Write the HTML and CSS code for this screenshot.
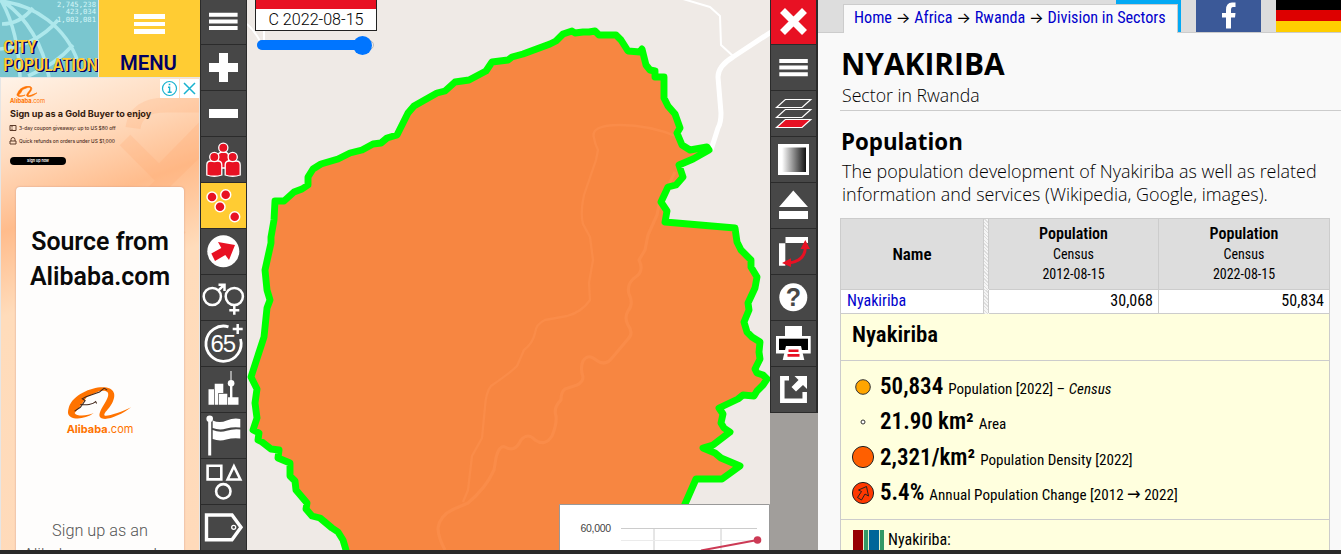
FILE: index.html
```html
<!DOCTYPE html>
<html lang="en">
<head>
<meta charset="utf-8">
<title>Nyakiriba (Sector, Rwanda)</title>
<link rel="stylesheet" href="styles.css">
</head>
<body>
<div class="app">
  <aside class="side">
    <div class="brand">
      <a class="logo">
        <svg class="globe" viewBox="0 0 98 77"><g fill="none" stroke="#aee8ec" stroke-width="3.600"><path d="M0 1C35 5 66 27 78 62M4 2C27 18 43 45 49 77M2 2C13 22 19 48 20 77M2 24Q20 24 33 8M0 49Q36 46 58 20M28 76Q55 65 73 45"/></g></svg>
        <span class="figures">2,745,238<br>423,034<br>1,003,081</span>
        <span class="wordmark"><span>CITY</span><span>POPULATION</span></span>
      </a>
      <a class="menu"><i></i><i></i><i></i><b>MENU</b></a>
    </div>
    <div class="ad">
      <svg class="ad-art" viewBox="0 0 198 160"><g fill="none" stroke="#ffa468" stroke-width="15" opacity=".2"><path d="M100 165L152 115 205 63M124 62L158 96 205 48M125 160L150 136 180 160M132 50Q135 27 165 27H200"/></g></svg>
      <div class="ad-badges">
        <svg viewBox="0 0 19 19"><circle cx="9.500" cy="9.500" r="7" fill="none" stroke="#18b2cf" stroke-width="1.200"/><path d="M8 8.200h1.600v5M7.700 13.300h4M8.700 5.500h1.600" fill="none" stroke="#18b2cf" stroke-width="1.400"/></svg>
        <svg viewBox="0 0 19 19"><path d="M4 4L15 15M15 4L4 15" stroke="#18b2cf" stroke-width="1.500"/></svg>
      </div>
      <svg class="ad-logo" viewBox="0 0 70 45"><path d="M6 21C10 9 26 1 39 1c12 0 14 7 8 16-4 6-8 10-8 13 0 4 20-4 28-8-9 8-22 14-30 12-10-4 7-17 9-24 2-6-3-7-9-5L21 11 15 22 8 29c2 4 14 3 21 0C20 34 10 35 5 32 1 29 3 26 6 21z" fill="#ff7300" stroke="#ff7300" stroke-width="2"/></svg>
      <div class="ad-name"><b>Alibaba</b>.com</div>
      <div class="ad-head">Sign up as a Gold Buyer to enjoy</div>
      <div class="ad-line"><svg viewBox="0 0 8 8"><path d="M1 1.500h6v5H1zM3 2v1.500M3 4.500V6" fill="none" stroke="#5c3a28"/></svg>3-day coupon giveaway: up to US $80 off</div>
      <div class="ad-line"><svg viewBox="0 0 8 8"><path d="M2 4V2.500a2 2 0 0 1 4 0V4M1 4h6v3H1z" fill="none" stroke="#5c3a28"/></svg>Quick refunds on orders under US $1,000</div>
      <div class="ad-cta">Sign up now</div>
      <div class="ad-card">
        <div class="card-title">Source from<br>Alibaba.com</div>
        <svg class="card-logo" viewBox="0 0 70 35"><path d="M3 22C7 9 26 1 38 1c13 0 15 8 10 17-4 7-8 9-8 12 0 3 18-3 28-8-9 7-22 13-29 12-11-2 4-17 5-24 1-5-3-6-9-5L22 11 14 22 9 28c2 4 14 3 20 0C21 34 10 35 5 32 1 30 2 26 3 22z" fill="#ff7300"/><path d="M40 2L35 6 21 11 17 13 20 15 15 22 9 26M15 19c6 1 13 0 16-3l1 2M40 2l3 2" fill="none" stroke="#40261a" stroke-width="1.100"/></svg>
        <div class="card-name"><b>Alibaba</b>.com</div>
        <div class="card-text">Sign up as an<br>Alibaba.com member</div>
      </div>
    </div>
  </aside>

  <nav class="tools">
    <a><svg viewBox="0 0 46 46"><path d="M9 13.700h28.600v4H9zM9 20.400h28.600v4H9zM9 27h28.600v4H9z" fill="#fff"/></svg></a>
    <a><svg viewBox="0 0 46 46"><path d="M9 18h10V8h9v10h10v9H28v10h-9V27H9z" fill="#fff"/></svg></a>
    <a><svg viewBox="0 0 46 46"><path d="M9 18h29v9H9z" fill="#fff"/></svg></a>
    <a><svg viewBox="0 0 46 46"><g fill="#e81123" stroke="#fff" stroke-width="1.300"><path d="M18 19q0-4 5.300-4t5.300 4v7l-3 1v4h-5v-4l-2.600-1z"/><circle cx="23.300" cy="10.700" r="4.600"/><path d="M6.800 38V28q0-4 4-4h7q4 0 4 4v10q-7.500 2.500-15 0zM25.200 38V28q0-4 4-4h7q4 0 4 4v10q-7.500 2.500-15 0z"/><circle cx="14.300" cy="20" r="4.600"/><circle cx="32.700" cy="20" r="4.600"/></g></svg></a>
    <a class="on"><svg viewBox="0 0 46 46"><g fill="#e81123" stroke="#fff" stroke-width="1.500"><circle cx="12" cy="14" r="5"/><circle cx="25.700" cy="11.700" r="5"/><circle cx="20" cy="23.700" r="5"/><circle cx="34.700" cy="33.700" r="5"/></g></svg></a>
    <a><svg viewBox="0 0 46 46"><circle cx="23.300" cy="22.300" r="16" fill="#fff"/><path d="M35 16L18 13l3.300 6-10 5.500L15 32l10.300-6 3.700 5z" fill="#e81123"/></svg></a>
    <a><svg viewBox="0 0 46 46"><g fill="none" stroke="#fff" stroke-width="2.500"><circle cx="12.300" cy="21.500" r="8.600"/><circle cx="34.300" cy="21.500" r="8.600"/><path d="M18.500 15.300L24 10M18.500 9.700H24.500V16M34.300 30v9.800M29.300 35.300h10"/></g></svg></a>
    <a><svg viewBox="0 0 46 46"><path d="M28.500 5.800A17.600 17.600 0 1 0 40.500 18" fill="none" stroke="#fff" stroke-width="2.800"/><path d="M37.700 3v10M32.700 8h10" stroke="#fff" stroke-width="2.500"/><text x="22.800" y="31" class="t65">65</text></svg></a>
    <a><svg viewBox="0 0 46 46"><g fill="#fff"><path d="M8.500 22.300H14v15.400H8.500zM14.700 16.700h8.600v9.300h-5v11.700h-3.600zM19 26.700h8.300v11H19zM28 30.300h10.500v7.400H28zM30.500 4h1v9.500h-1zM30 19h2.400v11.300H30z"/><circle cx="31.100" cy="16.300" r="3.300"/></g></svg></a>
    <a><svg viewBox="0 0 46 46"><g fill="#fff"><circle cx="9.700" cy="5.700" r="3.300"/><path d="M8.200 7h3v35.500h-3zM12.700 7.500q7 3 14 0t13.600-1.500v8.500q-7-1-14 1t-13.600-.5zM12.700 17q7 3 14 .8t13.600-1.300v9q-7-1-14 1t-13.600-.5z"/></g></svg></a>
    <a><svg viewBox="0 0 46 46"><g fill="none" stroke="#fff" stroke-width="2.600"><path d="M7.600 6.700h13.700v13.700H7.600zM33.900 7.300L27.600 20.500h12.700z"/><circle cx="23.300" cy="32.300" r="7.200"/></g></svg></a>
    <a><svg viewBox="0 0 46 46"><path d="M6.500 10h25.500l9 12.300-9 12.400H6.500z" fill="none" stroke="#fff" stroke-width="3.400"/><circle cx="33.700" cy="22.300" r="2" fill="none" stroke="#fff" stroke-width="1.300"/></svg></a>
  </nav>

  <main class="map">
    <svg class="map-art" viewBox="247 0 523 550">
      <defs><path id="sector" d="M348 560L346 550 343 540 338 532 332 528 320 518 312 516 306 509 307 503 296 490 295 481 290 476 290 463 278 458 279 450 271 449 262 442 258 440 259 433 253 430 257 418 255 403 257 389 251 377 264 337 267 308 270 300 267 290 265 270 271 243 271 237 274 220 275 201 284 201 294 192 302 189 308 185 308 177 313 169 321 164 338 159 350 153 362 150 373 144 381 143 387 138 397 135 408 113 414 106 437 93 445 91 455 82 469 80 486 71 492 62 508 60 512 57 523 54 550 44 556 41 563 34 572 31 575 33 583 32 589 32 595 31 599 35 616 35 621 40 628 51 640 52 642 49 646 65 650 70 655 71 655 77 664 77 664 98 668 106 675 114 680 128 677 133 682 145 690 150 707 147 709 150 693 159 679 165 683 177 676 185 668 187 661 202 667 211 665 222 735 228 737 242 741 250 751 260 751 267 757 277 755 288 748 303 749 310 744 322 747 332 752 337 760 342 759 352 760 359 755 369 757 373 763 375 767 379 763 385 757 391 754 396 743 395 738 399 719 408 723 414 721 423 724 428 730 432 713 445 703 448 715 453 721 458 740 466 722 479 696 479 685 504 665 560z"/></defs>
      <g fill="none" stroke="#fff" stroke-linejoin="round"><path d="M683-1l27 8 10 9 1 29 12 11M247 24q7 6 13 17M264 30v12" stroke-width="2"/><path d="M771 32l-38 25q-15 9-15 20l3 36q0 10-3 15l-7 22" stroke-width="5"/></g>
      <use href="#sector" fill="#f78641"/>
      <g fill="none" stroke="#fa8c49" stroke-linejoin="round"><path d="M678 137Q650 125 620 125T594 138Q595 144 598 150L596 160 584 195Q580 213 583 224L590 237 593 260 589 283 590 300Q582 312 567 316L545 320Q536 324 535 333 533 343 524 350L517 366Q510 373 491 386 486 392 485 407L482 438 472 456 468 490 463 502" stroke-width="2.300"/><path d="M675 172L659 205 657 215 648 235 645 250 639 260Q644 270 637 276 626 283 629 294 634 304 628 311 624 318 628 325 634 333 628 339L612 358Q605 367 596 360 588 353 583 361 580 368 583 377 583 382 577 385L565 389Q561 392 561 400 553 408 556 416 557 424 552 436 545 447 535 440 528 432 521 440 515 453 505 447 499 445 496 458L494 470Q486 488 468 503L454 509Q440 515 438 528 438 537 445 550" stroke-width="3.200"/></g>
      <use href="#sector" fill="none" stroke="#0f0" stroke-width="6.900" stroke-linejoin="round"/>
    </svg>
    <div class="period"><div class="date">C 2022-08-15</div></div>
    <div class="slider"><i></i></div>
    <svg class="chart" viewBox="0 0 211 46">
      <path d="M.5 46V.5H210.500V46" fill="#fff" stroke="#999"/>
      <path d="M62 24.500H198M95 24.500V46M162 24.500V46" stroke="#ccc" fill="none"/><path d="M62 36.500H198" stroke="#ebebeb"/>
      <path d="M142 46.500L198.500 36" stroke="#cc3a55" stroke-width="2"/><circle cx="198.500" cy="36" r="3.800" fill="#cc3a55"/>
      <text x="21.500" y="28" textLength="30.500">60,000</text>
    </svg>
  </main>

  <nav class="tools right">
    <a class="close"><svg viewBox="0 0 46 46"><path d="M12.500 11.500l22 22M34.500 11.500l-22 22" stroke="#fff" stroke-width="7"/></svg></a>
    <a><svg viewBox="0 0 46 46"><path d="M9.300 14h28.500v4H9.300zM9.300 20.600h28.500v4H9.300zM9.300 27.300h28.500v4H9.300z" fill="#fff"/></svg></a>
    <a><svg viewBox="0 0 46 46"><g fill="none" stroke="#fff" stroke-width="1.200"><path d="M15.300 8.500h25.500L32 16.500H6.500zM15.300 18.500h25.500L32 26.500H6.500z"/><path d="M15.300 28.500h25.500L32 36.500H6.500z" fill="#e81123"/></g></svg></a>
    <a><svg viewBox="0 0 46 46"><defs><linearGradient id="fade"><stop stop-color="#fff"/><stop offset="1" stop-color="#111"/></linearGradient></defs><path d="M8 7h31v31H8z" fill="#fff"/><path d="M12 10.500h24V35H12z" fill="url(#fade)"/></svg></a>
    <a><svg viewBox="0 0 46 46"><path d="M23.300 7.500L38 24H9zM9 28h29v8H9z" fill="#fff"/></svg></a>
    <a><svg viewBox="0 0 46 46"><path d="M15.500 8H38v6H15.500zM9 14.300h6.300v22.500H9z" fill="#fff"/><path d="M35.300 18q0 14-17 16.300" fill="none" stroke="#e81123" stroke-width="3"/><path d="M35.300 11l4.700 9h-9.500zM12 34l9-4.700V38z" fill="#e81123"/></svg></a>
    <a><svg viewBox="0 0 46 46"><circle cx="23.300" cy="22.300" r="14" fill="#fff"/><text x="23.300" y="31" class="help">?</text></svg></a>
    <a><svg viewBox="0 0 46 46"><path d="M15 5h17v10h8.700v17.500H6V15h9z" fill="#fff"/><path d="M9 17.700h29V29H9z"/><path d="M16 25h15l3.300 14H12.700z" fill="#fff"/><path d="M18.500 28.500h10v2.500h-10zM17.500 33h12v2.700h-12z" fill="#e81123"/></svg></a>
    <a><svg viewBox="0 0 46 46"><path d="M19 11.300h-6.700v22.500H34.700V25" fill="none" stroke="#fff" stroke-width="4.500"/><path d="M24.500 9H37v13l-4-4-7 6.500-4.500-4.500 7-7z" fill="#fff"/></svg></a>
  </nav>

  <section class="panel">
    <header>
      <div class="crumbs"><a>Home</a> <em>→</em> <a>Africa</a> <em>→</em> <a>Rwanda</a> <em>→</em> <a>Division in Sectors</a></div>
      <div class="twitter"></div>
      <svg class="facebook" viewBox="0 0 65 32"><path d="M0 0h65v32H0z" fill="#3b5998"/><path d="M30 28.500V17.500h-4v-4.500h4V10q0-7.500 6-7.500h3.500V7h-2.500q-2 0-2 3v3h4.500l-.5 4.500h-4v11z" fill="#fff"/></svg>
      <div class="flag"></div>
    </header>
    <div class="content">
      <h1>NYAKIRIBA</h1>
      <p class="sub">Sector in Rwanda</p>
      <h2>Population</h2>
      <p class="intro">The population development of Nyakiriba as well as related<br>information and services (Wikipedia, Google, images).</p>
      <div class="table">
        <div class="row head"><div class="name"><b>Name</b></div><div class="hatch"></div><div class="num"><b>Population</b><span>Census</span><span>2012-08-15</span></div><div class="num last"><b>Population</b><span>Census</span><span>2022-08-15</span></div></div>
        <div class="row data"><div class="name"><a>Nyakiriba</a></div><div class="hatch"></div><div class="num">30,068</div><div class="num last">50,834</div></div>
        <div class="info-title">Nyakiriba</div>
        <div class="stats">
          <div class="stat"><svg viewBox="0 0 24 24"><circle cx="12" cy="12" r="7.300" fill="#ffa500" stroke="#333"/></svg><b>50,834</b><span>Population [2022] – <i>Census</i></span></div>
          <div class="stat"><svg viewBox="0 0 24 24"><circle cx="12" cy="12" r="2" fill="#fff" stroke="#333"/></svg><b>21.90 km²</b><span>Area</span></div>
          <div class="stat"><svg viewBox="0 0 24 24"><circle cx="12" cy="12" r="10.600" fill="#ff5f00" stroke="#222"/></svg><b>2,321/km²</b><span>Population Density [2022]</span></div>
          <div class="stat"><svg viewBox="0 0 24 24"><circle cx="12" cy="12" r="10.600" fill="#ff3800" stroke="#222"/><path d="M15.500 5.500L7.500 9l3 1.500-4 6 4 2.500 3.500-6 3.500 2z" fill="none" stroke="#222"/></svg><b>5.4%</b><span>Annual Population Change [2012 <em>→</em> 2022]</span></div>
        </div>
        <div class="book"><svg viewBox="0 0 31 22"><path d="M0 0h10v22H0z" fill="#900"/><path d="M11 0h4v22h-4zM27 0h4v22h-4z" fill="#396"/><path d="M16 0h10v22H16z" fill="#069"/><path d="M10 0h1v22h-1zM15 0h1v22h-1zM26 0h1v22h-1z" fill="#e5f3cf"/></svg>Nyakiriba:</div>
      </div>
    </div>
  </section>
</div>
<footer></footer>
</body>
</html>
```
FILE: styles.css
```css
*{box-sizing:border-box}
body{margin:0;width:1341px;height:554px;overflow:hidden;background:#f9f9f9;color:#000;font-family:"Open Sans",sans-serif}
svg{display:block}
p,h1,h2{margin:0}
.app{display:flex;height:550px;overflow:hidden}
footer{height:4px;background:#292929}
.side{width:200px;background:#e5e5e5;display:flex;flex-direction:column}
.brand{display:flex;gap:1px;height:77px}
.logo{position:relative;width:98px;background:#7ac6cf;overflow:hidden}
.globe{width:98px;height:77px}
.figures{position:absolute;right:2px;top:1px;text-align:right;font:7.200px/7.400px "DejaVu Sans Mono",monospace;color:#d5f6f8}
.wordmark{position:absolute;left:3px;top:38px;font:500 18.600px/18px "Roboto Condensed",Roboto,sans-serif;font-stretch:75%;letter-spacing:-.45px;color:#fc3;text-shadow:1px 1px 0 #006,1.500px 1px 0 #006}
.wordmark span{display:block}
.menu{flex:1;background:#fc3;display:flex;flex-direction:column;align-items:center;gap:3px;padding-top:14px}
.menu i{width:31px;height:4.600px;background:#fff}
.menu b{margin:15px 2px 0 0;font:600 20.300px/22px Roboto,sans-serif;color:#006}
.ad{position:relative;flex:1;margin:1px 1px 0 1px;background:linear-gradient(160deg,#fff3e8 0,#ffdcc0 75px,#ffbc8c 145px,#ffdcbb 225px,#ffdaba 100%);overflow:hidden}
.ad-art{position:absolute;left:0;top:0;width:198px}
.ad-badges{position:absolute;top:1px;right:0;display:flex;gap:1px}
.ad-badges svg{width:19px;height:19px;background:#fff}
.ad-logo{position:relative;width:22px;height:14px;margin:8px 0 0 15px}
.ad-name{position:relative;margin-left:9px;font:5.800px/6px Inter,sans-serif;color:#ff7300;width:50px;margin-top:-2px}
.ad-head{position:relative;margin:5px 0 0 9px;font:700 9.050px/10px Inter,sans-serif;color:#35200f;white-space:nowrap}
.ad-line{position:relative;display:flex;gap:2px;margin:5px 0 0 8px;font:500 4.850px/8px Inter,sans-serif;color:#4b2c1c;white-space:nowrap}
.ad-line svg{width:8px;height:8px}
.ad-cta{position:relative;width:56px;height:8px;margin:12px 0 0 9px;border-radius:4px;background:#000;color:#fff;text-align:center;font:600 3.700px/8px Inter,sans-serif}
.ad-card{position:absolute;left:15px;top:109px;width:168px;height:400px;background:#fefdfc;border-radius:4px;box-shadow:0 0 2px #c98;text-align:center}
.card-title{margin-top:37px;font:600 24.900px/35px Roboto,sans-serif;color:#0a0a0a}
.card-logo{width:67px;height:34px;margin:92px 0 0 50px}
.card-name{margin-top:4px;font:11px/11px Inter,sans-serif;color:#ff7300}
.card-text{margin-top:84px;font:300 16.300px/24px Roboto,sans-serif;color:#555}
.tools{width:47px;margin-top:-1px;background:#2b2b2b}
.tools a{display:block;width:45px;height:45px;margin:0 1px 1px;background:#474747}
.tools a svg{width:46px;height:46px;margin-left:-1px}
.tools .on{background:#fc3}
.tools .close{background:#e81123}
.right{width:48px;background:linear-gradient(#2b2b2b 414px,#a19e9b 414px)}
.t65{font:300 24px "Liberation Sans";letter-spacing:-1px;text-anchor:middle;fill:#fff}
.help{font:700 25px "Liberation Sans";text-anchor:middle;fill:#474747}
.map{position:relative;width:523px;background:#efeae6}
.map-art{width:523px;height:550px}
.period{position:absolute;left:8px;top:0;width:122px;height:31px;border:1px solid #222;border-top:0;background:#fff}
.period::before{content:"";display:block;height:9px;background:#e81123}
.date{font:350 16.100px/21px Roboto,sans-serif;text-align:center}
.slider{position:absolute;left:10px;top:40px;width:117px;height:10px;border:1px solid #bbb;border-radius:5px;background:#eee}
.slider::before{content:"";position:absolute;left:-1px;top:-1px;width:105px;height:10px;border-radius:5px;background:#0075ff}
.slider i{position:absolute;left:95px;top:-5px;width:19px;height:19px;border-radius:50%;background:#0075ff}
.chart{position:absolute;left:313px;bottom:0;width:211px;height:46px;margin-left:-1px}
.chart text{font:10.500px "Liberation Sans";fill:#444}
.panel{flex:1}
header{display:flex;height:33px;background:#ddd;border-bottom:1px solid #ccc}
.crumbs{position:relative;z-index:1;width:335px;height:29px;margin:4px 0 0 25px;padding-left:10px;background:#f9f9f9;border:1px solid #ccc;border-bottom:0;font:16.200px/26px "Roboto Condensed",Roboto,sans-serif;font-stretch:75%;white-space:nowrap}
a{color:#00c}
em{font-style:normal;font-family:"DejaVu Sans",sans-serif}
.crumbs em{font-family:Inter,sans-serif;font-size:15.500px}
.twitter{width:65px;height:32px;margin-left:-62px;background:#03a9f4}
.facebook{width:65px;height:32px;margin-left:15px}
.flag{width:65px;height:32px;margin-left:15px;background:linear-gradient(#000 10px,#d00 10px 21px,#ffce00 21px)}
.content{padding-left:22px}
h1{font:700 29.900px/38px "Open Sans",sans-serif;padding:12px 0 0 1px}
.sub{font-size:17.700px;font-weight:340;line-height:24px;height:28px;border-bottom:1px solid #ccc;padding-left:2px}
h2{font:700 22.300px/30px "Open Sans",sans-serif;padding-left:1px;margin-top:16px}
.intro{font-size:17.950px;font-weight:340;line-height:23px;padding-left:2px;margin-top:3px;white-space:nowrap}
.table{width:490px;margin-top:12px;border:1px solid #ccc;font-family:"Roboto Condensed",Roboto,sans-serif;font-stretch:75%;background:#ffffde}
.row{display:grid;grid-template-columns:143px 5px 170px 170px;border-bottom:1px solid #ccc;background:#fff}
.head{height:71px;background:#ddd}
.head .name{display:flex;align-items:center;justify-content:center}
.head .num{display:flex;flex-direction:column;align-items:center;padding-top:5px}
.row b{font-weight:600;font-size:16px;line-height:20px}
.head .name b{font-size:17px}
.head span{font-size:14px;line-height:20px}
.name,.num{border-right:1px solid #ccc}
.num{border-left:1px solid #ccc}
.head .num,.data .num{margin-left:-1px}
.num.last{border-right:0}
.hatch{background:repeating-linear-gradient(45deg,#ddd 0 1px,#f5f5f5 1px 2.500px);margin-bottom:-1px}
.data{height:24px;font-size:16px;font-weight:370;line-height:21px}
.data .name{padding-left:6px}
.data .num{text-align:right;padding-right:5px}
.info-title{height:47px;border-bottom:1px solid #ccc;font-size:22.800px;font-weight:600;line-height:41px;padding-left:11px}
.stats{height:159px;border-bottom:1px solid #ccc;padding:8px 0 0 10px}
.stat{display:flex;align-items:baseline;height:35.300px;line-height:35px;white-space:nowrap}
.stat svg{width:24px;height:24px;align-self:center;margin-right:5px}
.stat b{font-size:23px;font-weight:600;margin-right:5px}
.stat span{font-size:15.100px;font-weight:370}
.stat em{font-size:18px;line-height:1}
.book{display:flex;gap:4px;padding:10px 0 0 12px;font-size:16px;font-weight:370;line-height:19px}
.book svg{width:31px;height:22px}
```
